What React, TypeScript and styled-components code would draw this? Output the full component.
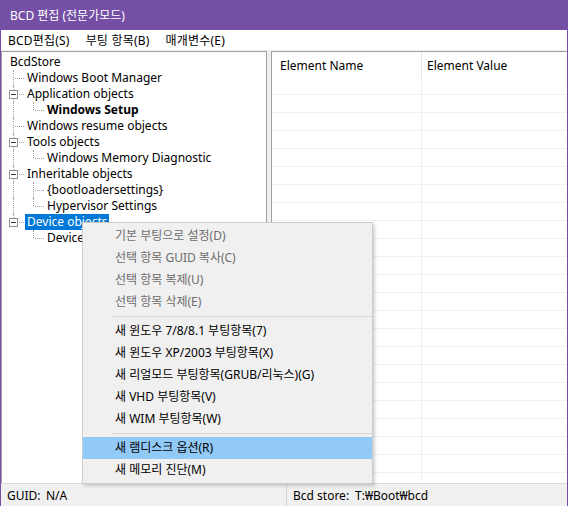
import styled, { createGlobalStyle } from 'styled-components';

type Guide = 'blank' | 'line' | 'tee' | 'elbow';

interface ITreeRow {
  label: string;
  guides: Guide[];
  box?: boolean;
  bold?: boolean;
  selected?: boolean;
}

const treeRows: ITreeRow[] = [
  { label: 'BcdStore', guides: [] },
  { label: 'Windows Boot Manager', guides: ['tee'] },
  { label: 'Application objects', guides: ['tee'], box: true },
  { label: 'Windows Setup', guides: ['line', 'elbow'], bold: true },
  { label: 'Windows resume objects', guides: ['tee'] },
  { label: 'Tools objects', guides: ['tee'], box: true },
  { label: 'Windows Memory Diagnostic', guides: ['line', 'elbow'] },
  { label: 'Inheritable objects', guides: ['tee'], box: true },
  { label: '{bootloadersettings}', guides: ['line', 'tee'] },
  { label: 'Hypervisor Settings', guides: ['line', 'elbow'] },
  { label: 'Device objects', guides: ['elbow'], box: true, selected: true },
  { label: 'Device options', guides: ['blank', 'elbow'] },
];

interface IMenuEntry {
  label?: string;
  disabled?: boolean;
  active?: boolean;
  separator?: boolean;
}

const menuEntries: IMenuEntry[] = [
  { label: '기본 부팅으로 설정(D)', disabled: true },
  { label: '선택 항목 GUID 복사(C)', disabled: true },
  { label: '선택 항목 복제(U)', disabled: true },
  { label: '선택 항목 삭제(E)', disabled: true },
  { separator: true },
  { label: '새 윈도우 7/8/8.1 부팅항목(7)' },
  { label: '새 윈도우 XP/2003 부팅항목(X)' },
  { label: '새 리얼모드 부팅항목(GRUB/리눅스)(G)' },
  { label: '새 VHD 부팅항목(V)' },
  { label: '새 WIM 부팅항목(W)' },
  { separator: true },
  { label: '새 램디스크 옵션(R)', active: true },
  { label: '새 메모리 진단(M)' },
];

const gridRows = Array.from({ length: 23 }, (_, i) => i);

export default function App() {
  return (
    <>
      <GlobalStyle />
      <Window>
        <TitleBar>BCD 편집 (전문가모드)</TitleBar>
        <MenuBar>
          <MenuBarItem>BCD편집(S)</MenuBarItem>
          <MenuBarItem>부팅 항목(B)</MenuBarItem>
          <MenuBarItem>매개변수(E)</MenuBarItem>
        </MenuBar>
        <Body>
          <TreePanel>
            {treeRows.map((row) => (
              <TreeRow key={row.label}>
                {row.guides.map((g, i) => (
                  <GuideCell key={i} $kind={g}>
                    {row.box && i === row.guides.length - 1 && (
                      <ExpandBox>
                        <Minus />
                      </ExpandBox>
                    )}
                  </GuideCell>
                ))}
                <TreeLabel
                  $bold={row.bold}
                  $selected={row.selected}
                  $root={row.guides.length === 0}
                >
                  {row.label}
                </TreeLabel>
              </TreeRow>
            ))}
          </TreePanel>
          <ListPanel>
            <ListHeader>
              <HeaderCell $first>Element Name</HeaderCell>
              <HeaderCell>Element Value</HeaderCell>
            </ListHeader>
            {gridRows.map((i) => (
              <GridRow key={i}>
                <GridCell $first />
                <GridCell />
              </GridRow>
            ))}
          </ListPanel>
        </Body>
        <StatusBar>
          <StatusPanel $width={285}>
            <StatusLabel $width={39}>GUID:</StatusLabel>
            <span>N/A</span>
          </StatusPanel>
          <StatusPanel $divider>
            <StatusLabel $width={62}>Bcd store:</StatusLabel>
            <span>T:₩Boot₩bcd</span>
          </StatusPanel>
        </StatusBar>
        <ContextMenu>
          {menuEntries.map((e, i) =>
            e.separator ? (
              <MenuSeparator key={i} />
            ) : (
              <MenuItem key={i} $disabled={e.disabled} $active={e.active}>
                {e.label}
              </MenuItem>
            ),
          )}
        </ContextMenu>
      </Window>
    </>
  );
}

const GlobalStyle = createGlobalStyle`
  html, body {
    margin: 0;
    padding: 0;
    background: #ffffff;
  }
  body {
    font-family: 'Noto Sans', 'Noto Sans CJK KR', sans-serif;
    font-size: 12px;
    color: #000000;
  }
`;

const Window = styled.div`
  position: relative;
  width: 568px;
  height: 506px;
  box-sizing: border-box;
  display: flex;
  flex-direction: column;
  border-left: 1px solid #744fa5;
  border-right: 1px solid #744fa5;
  overflow: hidden;
  background: #f0f0f0;
`;

const TitleBar = styled.div`
  height: 30px;
  flex: none;
  margin: 0 -1px;
  padding-left: 10px;
  display: flex;
  align-items: center;
  background: #744fa5;
  color: #ffffff;
  font-size: 12px;
`;

const MenuBar = styled.div`
  height: 20px;
  flex: none;
  display: flex;
  align-items: center;
  gap: 16px;
  padding-left: 7px;
  background: #ffffff;
`;

const MenuBarItem = styled.span`
  line-height: 21px;
  letter-spacing: 0.2px;
`;

const Body = styled.div`
  flex: 1;
  min-height: 0;
  display: flex;
  gap: 4px;
  padding-top: 1px;
`;

const TreePanel = styled.div`
  width: 266px;
  flex: none;
  box-sizing: border-box;
  border: 1px solid #a0a0a0;
  border-bottom: none;
  background: #ffffff;
  padding: 2px 0 0 2px;
`;

const TreeRow = styled.div`
  display: flex;
  height: 16px;
  align-items: center;
`;

const GuideCell = styled.span<{ $kind: Guide }>`
  position: relative;
  flex: none;
  width: 20px;
  height: 16px;

  &::before {
    content: '';
    display: ${(p) => (p.$kind === 'blank' ? 'none' : 'block')};
    position: absolute;
    left: 9px;
    top: 0;
    height: ${(p) => (p.$kind === 'elbow' ? '8px' : '16px')};
    border-left: 1px dotted #a0a0a0;
  }

  &::after {
    content: '';
    display: ${(p) => (p.$kind === 'tee' || p.$kind === 'elbow' ? 'block' : 'none')};
    position: absolute;
    left: 11px;
    right: 0;
    top: 8px;
    border-top: 1px dotted #a0a0a0;
  }
`;

const ExpandBox = styled.span`
  position: absolute;
  z-index: 1;
  left: 5px;
  top: 4px;
  width: 9px;
  height: 9px;
  box-sizing: border-box;
  border: 1px solid #919191;
  background: #ffffff;
  display: flex;
  align-items: center;
  justify-content: center;
`;

const Minus = styled.span`
  width: 5px;
  height: 1px;
  background: #333333;
`;

const TreeLabel = styled.span<{ $bold?: boolean; $selected?: boolean; $root?: boolean }>`
  margin-left: ${(p) => (p.$root ? '4px' : '1px')};
  padding: 0 2px;
  line-height: 16px;
  white-space: nowrap;
  font-weight: ${(p) => (p.$bold ? 700 : 400)};
  background: ${(p) => (p.$selected ? '#0078d7' : 'transparent')};
  color: ${(p) => (p.$selected ? '#ffffff' : '#000000')};
`;

const ListPanel = styled.div`
  flex: 1;
  min-width: 0;
  box-sizing: border-box;
  border: 1px solid #a0a0a0;
  border-bottom: none;
  border-right: none;
  background: #ffffff;
  overflow: hidden;
`;

const ListHeader = styled.div`
  display: flex;
  height: 25px;
`;

const HeaderCell = styled.div<{ $first?: boolean }>`
  width: ${(p) => (p.$first ? '141px' : 'auto')};
  flex: ${(p) => (p.$first ? 'none' : '1')};
  padding-left: ${(p) => (p.$first ? '8px' : '5px')};
  box-sizing: content-box;
  border-right: ${(p) => (p.$first ? '1px solid #e5e5e5' : 'none')};
  line-height: 25px;
  padding-top: 1px;
  white-space: nowrap;
`;

const GridRow = styled.div`
  display: flex;
  height: 18px;
  box-sizing: border-box;
  border-bottom: 1px solid #f0f0f0;
`;

const GridCell = styled.div<{ $first?: boolean }>`
  width: ${(p) => (p.$first ? '149px' : 'auto')};
  flex: ${(p) => (p.$first ? 'none' : '1')};
  border-right: ${(p) => (p.$first ? '1px solid #f0f0f0' : 'none')};
`;

const StatusBar = styled.div`
  height: 23px;
  flex: none;
  display: flex;
  align-items: stretch;
  box-sizing: border-box;
  border-top: 1px solid #dadada;
  background: #f0f0f0;
`;

const StatusPanel = styled.div<{ $width?: number; $divider?: boolean }>`
  width: ${(p) => (p.$width ? `${p.$width}px` : 'auto')};
  flex: ${(p) => (p.$width ? 'none' : '1')};
  display: flex;
  align-items: center;
  padding: 1px 0 0 6px;
  box-sizing: border-box;
  border-left: ${(p) => (p.$divider ? '1px solid #d4d4d4' : 'none')};
`;

const StatusLabel = styled.span<{ $width: number }>`
  display: inline-block;
  width: ${(p) => p.$width}px;
`;

const ContextMenu = styled.div`
  position: absolute;
  left: 81px;
  top: 222px;
  width: 291px;
  box-sizing: border-box;
  padding: 2px 0;
  background: #f0f0f0;
  border: 1px solid #cccccc;
  box-shadow: 2px 2px 3px rgba(0, 0, 0, 0.18);
`;

const MenuItem = styled.div<{ $disabled?: boolean; $active?: boolean }>`
  height: 22px;
  line-height: 22px;
  padding-left: 32px;
  white-space: nowrap;
  color: ${(p) => (p.$disabled ? '#6d6d6d' : '#000000')};
  background: ${(p) => (p.$active ? '#91c9f7' : 'transparent')};
`;

const MenuSeparator = styled.div`
  height: 7px;
  display: flex;
  align-items: center;
  padding-left: 29px;

  &::after {
    content: '';
    flex: 1;
    border-top: 1px solid #d7d7d7;
  }
`;
